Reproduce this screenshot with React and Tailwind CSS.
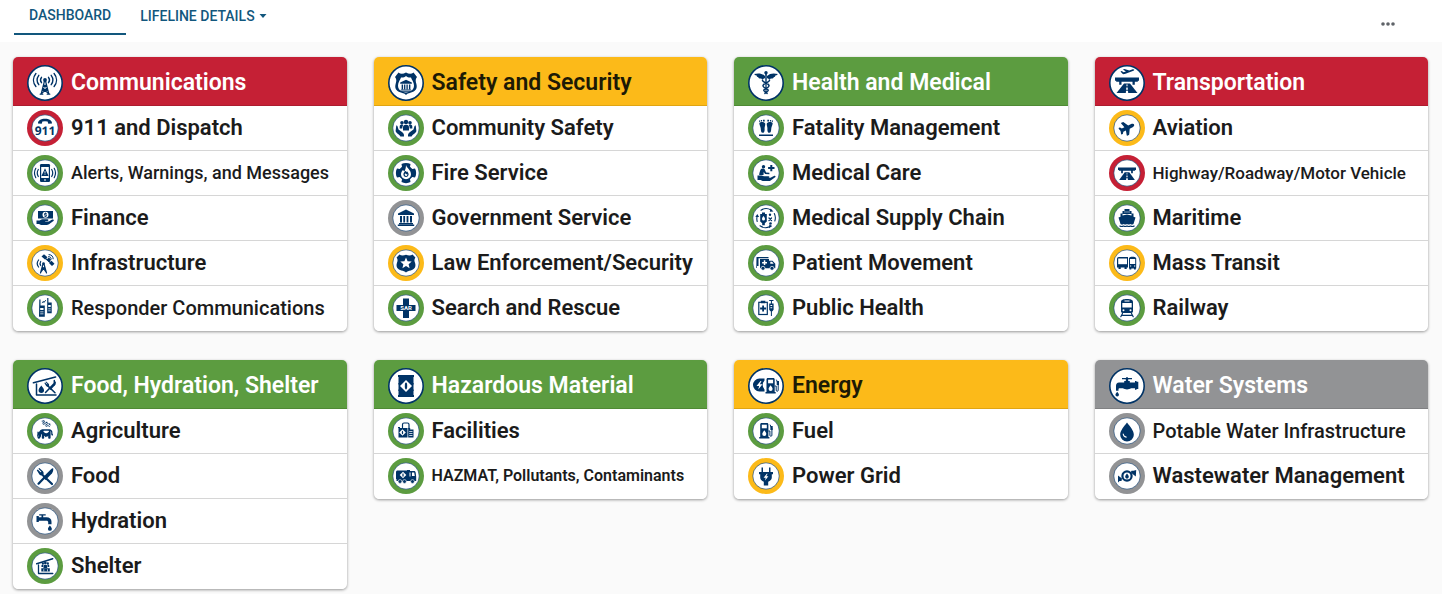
import { FaCow, FaFire, FaPlane, FaPlaneDeparture } from "react-icons/fa6";

const navy = "#003366";

const ringTheme = {
  red: "#c52035",
  green: "#5c9c40",
  yellow: "#fcba19",
  gray: "#929395",
};

const headerTheme = {
  red: "bg-[#c52035] border-[#ad1c2f] text-white",
  green: "bg-[#5c9c40] border-[#4f8a35] text-white",
  yellow: "bg-[#fcba19] border-[#e0a512] text-[#1d1a05]",
  gray: "bg-[#929395] border-[#808183] text-white",
};

const sizeTheme = {
  lg: "text-[22px] font-semibold",
  md: "text-[20px] font-medium",
  sm: "text-[18px] font-medium",
  xs: "text-[17px] font-medium",
  xxs: "text-[16px] font-semibold",
};

// Shared pieces, drawn on the same 36 x 36 grid as the badges
function Line({ d, w = 1.3, color = navy }) {
  return <path d={d} fill="none" stroke={color} strokeWidth={w} strokeLinecap="round" strokeLinejoin="round" />;
}

function Bolt({ x, y, s = 1 }) {
  return <path transform={`translate(${x} ${y}) scale(${s})`} d="M1-4l-4 5h2.6L-1.2 4.4 3-.8H.4L2-4z" fill="white" />;
}

function Pump() {
  return (
    <>
      <path d="M1 1.5C1 .6 1.5 0 2.4 0h5.4c.9 0 1.4.6 1.4 1.5V14h1v1.6H0V14h1z" />
      <rect x="2.6" y="1.7" width="5" height="3.6" fill="white" />
      <path d="M5.1 7.2c1 1.5 2 2.5 2 3.7a2 2 0 0 1-4 0c0-1.2 1-2.2 2-3.7z" fill="white" />
      <Line d="M9.5 8h1.2v4.2c0 1.5 2 1.5 2 0V5.5L11 2" w={1} />
      <rect x="11.2" y="3" width="2.3" height="4" />
    </>
  );
}

function Building() {
  return (
    <>
      <path d="m9 3.5 8-4 8 4V5H9z" />
      <path d="M11 6h2v6.5h-2zM14.300 6h1.800v6.500h-1.800zM17.600 6h1.800v6.500h-1.800zM21 6h2v6.500h-2zM10 13h14v1.200H10zM8.800 14.600h16.400v1.500H8.800z" />
    </>
  );
}

function Shield() {
  return (
    <path d="M11.500 9.500c1.300 1 3.900 1.300 6.500.2 2.600 1.100 5.200.8 6.500-.2l2.900 3c-1.500 2-1 3.600-.4 5.300 1.500 4.500-1 6.700-4.300 7.700-2 .5-3.500.9-4.700 2-1.200-1.100-2.700-1.500-4.700-2-3.300-1-5.800-3.200-4.300-7.700.6-1.700 1.100-3.300-.4-5.300z" />
  );
}

function Bridge() {
  return (
    <>
      <path d="M6 12.500h24v3.200h-1.200v1h-3v3h-2.300v-3h-11v3h-2.300v-3h-3v-1H6z" />
      <path d="M15 18.500h6L28.500 28h-21z" />
      <path d="M17.600 19.300h.8l.2 2h-1.200zM17.300 22.500h1.400l.2 2.200h-1.800zM17 25.800h2l.2 2.200h-2.400z" fill="white" />
    </>
  );
}

function Drop({ x, y, s = 1 }) {
  return <path transform={`translate(${x} ${y}) scale(${s})`} d="M0-8.5C2.5-5 6.5-1 6.5 3a6.5 6.5 0 0 1-13 0C-6.5-1-2.5-5 0-8.5z" />;
}

function Utensils() {
  return (
    <>
      <Line d="M14 15.5 25 26" w={2.2} />
      <path d="M9.800 12.300l1-.9 3 3 .6-.6-3-3 .9-.8 3.600 3.200c1 1.300 1 2.600 0 3.500-1.200 1-2.500.8-3.500-.2z" />
      <Line d="M11.500 25.700 17 20" w={2.2} />
      <path d="M15.800 19.500 24 11.200c.8-.8 1.600-1.200 2.200-1 .4 2.400-.6 4.600-2.300 6.400L18.600 22z" />
    </>
  );
}

function Diamond({ x, y, s = 1 }) {
  return (
    <g transform={`translate(${x} ${y}) scale(${s})`}>
      <path d="M0-6 6 0 0 6-6 0z" fill="white" />
      <ellipse rx="1.2" ry="3.4" />
    </g>
  );
}

function People() {
  return (
    <>
      <circle cx="14" cy="12.8" r="1.8" />
      <circle cx="18" cy="12" r="2.2" />
      <circle cx="22" cy="12.8" r="1.8" />
      <path d="M11.700 16.500c0-1.500 1-2 2.400-2 .7 0 1 .3 1 .7-.6.800-.8 1.800-.8 3.300h-2.600zM24.300 16.500c0-1.500-1-2-2.400-2-.7 0-1 .3-1 .7.600.800.800 1.800.800 3.300h2.600z" />
      <path d="M15 17.500c0-2 1.200-2.700 3-2.700s3 .7 3 2.700v3h-6z" />
    </>
  );
}

const glyphs = {
  tower: (
    <>
      <circle cx="18" cy="15" r="1.9" />
      <Line d="M14.500 12.300a4.500 4.500 0 0 0 0 5.400M21.500 12.300a4.500 4.500 0 0 1 0 5.400" w={1.4} />
      <Line d="M11.800 10.300a8 8 0 0 0 0 9.400M24.200 10.300a8 8 0 0 1 0 9.400" w={1.4} />
      <Line d="M8.900 8.500c-3.200 4-3.200 9.200 0 13M27.100 8.500c3.200 4 3.200 9.200 0 13" w={1.4} />
      <Line d="M17.500 16 14.300 28.500M18.500 16l3.200 12.500M16.500 20.300h3M15.600 24.500h4.800M16.400 20.500l3.900 3.800-5.500 3.700M19.600 20.500l-3.900 3.800 5.500 3.700M13.200 29.200h2.600M20.200 29.200h2.600" w={1.2} />
    </>
  ),
  dispatch: (
    <>
      <path d="M11 13.500c-.3-3 3-4.700 7-4.700s7.300 1.700 7 4.700l-3.700.3-.7-2.300a10 10 0 0 0-5.200 0l-.7 2.300z" />
      <text x="18" y="24.800" textAnchor="middle" fontSize="12" fontWeight="700" fontFamily="Open Sans, sans-serif" textRendering="geometricPrecision">911</text>
    </>
  ),
  alert: (
    <>
      <rect x="13" y="9" width="10" height="18" rx="1.3" />
      <rect x="14.2" y="12" width="7.6" height="11" fill="white" />
      <path d="M18 13.300 21.600 21h-7.200z" />
      <path d="M17.600 16h.8v2.500h-.8zM17.600 19.200h.8v.8h-.8zM17 24.500h2v1h-2z" fill="white" />
      <Line d="M11.300 14.500c-1.200 2-1.200 5 0 7M24.700 14.500c1.200 2 1.200 5 0 7M8.800 13.300c-1.700 3-1.700 6.400 0 9.400M27.200 13.300c1.700 3 1.700 6.400 0 9.400" w={1.2} />
    </>
  ),
  finance: (
    <>
      <rect x="11" y="11" width="15" height="7.5" />
      <circle cx="18.5" cy="14.7" r="3" fill="white" />
      <path d="M18.100 12.500h.8v.7h.9v.8h-1.600v.5h1.600v2h-.9v.6h-.8v-.6h-.9v-.8h1.700v-.5h-1.700v-2h.9z" />
      <path d="M9.500 20.500h3l2.500-1.300h5.500c1.200 0 1.200 1.700 0 1.800h-2.300v.5h3.600l3.400-1.900c1.400-.6 2.200.4 1.200 1.300l-4.400 3.300c-.8.600-1.500.8-2.400.8h-5.600l-2-.9H9.500z" />
    </>
  ),
  satellite: (
    <>
      <path d="m14.500 11.500 2.500-2.200 3.500 3-2.500 2.200zM22 18l2.500-2.200 3 3-2.500 2.200zM19.800 14.400l2-2 2.500 2.300-2.500 2.600z" />
      <Line d="M18.500 13.500l5 4" w={1.2} />
      <Line d="M22 9.600c2.500 0 4.200 1.800 4.200 4.200M21.600 11.600c1.600 0 2.600 1 2.600 2.400" w={1} />
      <circle cx="16.5" cy="18.5" r="1.300" />
      <Line d="m16 19-2.500 9M17 19l2.500 9M14.800 23.500h3.600M15.400 22l3.600 5M17.600 22l-3.600 5" w={1.2} />
      <Line d="M13.700 16.500c-.8 1.200-.8 2.800 0 4M11.600 15c-1.600 2-1.600 5 0 7" w={1.2} />
    </>
  ),
  radios: (
    <>
      <path d="M12.300 9.500h1.200v6h4.300v11.300H12zM20.200 8h1.200v4.500h3.300v10.800h-4.500z" />
      <path d="M13.200 18h3.300v2h-3.300zM13.200 21.500h3.300v.8h-3.300zM13.200 23.500h3.300v.8h-3.300zM21.200 15h2.500v2h-2.500zM21.200 18.500h2.500v.8h-2.500zM21.200 20.500h2.500v.8h-2.500z" fill="white" />
      <Line d="m15.200 12.500 1.300-1 .4 1 1.600-2" w={1} />
    </>
  ),
  safety: (
    <>
      <path d="M10.500 7.500c2 1.800 4.700 1.600 7.500 0 2.800 1.600 5.500 1.800 7.500 0L29 12c-2 2.600-1.300 4.700-.6 7 1.500 5.600-2 7.600-6 8.700-2 .5-3.400 1-4.400 2.300-1-1.300-2.400-1.800-4.400-2.300-4-1.100-7.500-3.100-6-8.700.7-2.300 1.400-4.400-.6-7z" />
      <path d="M18 11c1.500 1.300 3.200 1.800 5 1.500.6 2.200 3 4.700 3 8 0 5-4 6.300-8 7-4-.7-8-2-8-7 0-3.300 2.400-5.800 3-8 1.800.3 3.500-.2 5-1.500z" fill="white" />
      <g transform="translate(5.600 15) scale(.73)"><Building /></g>
    </>
  ),
  community: (
    <>
      <People />
      <path d="M8.300 15.500c1 0 1.300.7 1.500 1.700l.7 2.300 3.800 2.800c1.600 1.200 1.700 2.200 1.700 4.200h-3.600c-.3-1.600-4.600-3.500-4.800-5.500zM27.700 15.500c-1 0-1.300.7-1.500 1.700l-.7 2.300-3.800 2.800c-1.600 1.200-1.700 2.200-1.700 4.200h3.600c.3-1.600 4.600-3.500 4.800-5.500z" />
    </>
  ),
  fire: (
    <>
      <path d="M13.500 9c2.500-1.500 6.500-1.500 9 0l-.5 2.700 2.300 2.300 2.700-.5c1.500 2.500 1.500 6.500 0 9l-2.700-.5-2.300 2.300.5 2.700c-2.500 1.500-6.500 1.500-9 0l.5-2.700-2.300-2.300-2.700.5c-1.500-2.500-1.500-6.500 0-9l2.700.5 2.300-2.300z" />
      <path d="M18 10c.5 3 5 4.800 5 9.200a5 5 0 0 1-10 0c0-2 1-3.300 2-4.300l1.300 1.600c1-1.700 1.700-3.500 1.700-6.500z" fill="white" />
      <FaFire x="15" y="16" size={6} color={navy} />
    </>
  ),
  government: <g transform="translate(1 10)"><Building /></g>,
  police: (
    <>
      <Shield />
      <path d="m18 12.500 1.600 3.800 4.100.3-3.100 2.600 1 4-3.600-2.200-3.600 2.200 1-4-3.100-2.600 4.100-.3z" fill="white" />
    </>
  ),
  rescue: (
    <>
      <path d="M15 8.500h6V15h6.500v6H21v7h-6v-7H8.500v-6H15z" />
      <text x="18" y="20.200" textAnchor="middle" fontSize="6" fontWeight="700" fill="white">SAR</text>
    </>
  ),
  caduceus: (
    <>
      <circle cx="18" cy="7.800" r="1.700" />
      <path d="M17 11c-3-3-7-3-11-2 1 1 2 1.500 3 1.700-.4.500-.2 1 1.300 1.500 0 .8 1 1.400 2.300 1.400 1.400.8 3.400.5 4.400-.6zM19 11c3-3 7-3 11-2-1 1-2 1.500-3 1.700.4.500.2 1-1.300 1.500 0 .8-1 1.400-2.300 1.400-1.400.8-3.400.5-4.400-.6z" />
      <path d="M17.200 9h1.600l-.3 20h-1z" />
      <Line d="M14.500 15c-1 2.500 7 3 6.500 6-.4 2.500-5.500 2-5.200 4.500.2 1.500 3.500 1.300 3.300 3M21.500 15c1 2.500-7 3-6.500 6 .4 2.500 5.500 2 5.200 4.500-.2 1.500-3.500 1.300-3.300 3" w={1.5} />
    </>
  ),
  feet: (
    <>
      <path d="M11.500 12.800c1-1.300 5.200-1.200 5.700.8.300 2-.7 3-.6 5 .2 2.500-.5 4.200-1.900 4.200-1.700 0-1.800-2-2-4.500-.2-2-1.800-3.800-1.200-5.500zM24.500 12.800c-1-1.300-5.200-1.200-5.700.8-.3 2 .7 3 .6 5-.2 2.500.5 4.200 1.900 4.200 1.700 0 1.800-2 2-4.500.2-2 1.800-3.800 1.200-5.500z" />
      <path d="M11 10.500h1.200v1.300H11zM12.900 9.900h1.200v1.500h-1.200zM15 9.700h1.700v1.700H15zM19.300 9.700H21v1.700h-1.700zM21.900 9.900h1.200v1.500h-1.200zM23.800 10.500H25v1.300h-1.200zM11 24.500h14V26H11z" />
    </>
  ),
  care: (
    <>
      <circle cx="15.5" cy="11.700" r="1.700" />
      <path d="M13 14c.8-.8 2.800-.8 3.500 0l1.600 3.500 3.300.3v1.500l-4.300-.2-1.400-2-.2 3h-4.300c0-2 .8-4.500 1.800-6.100z" />
      <path d="M22.300 10h2v2h2.200v2h-2.200v2.200h-2V14h-2.200v-2h2.200z" />
      <path d="M9.500 20.500h4l2.500.7h4.500c1.200 0 1.200 1.500 0 1.600h2l3.400-1.900c1.400-.6 2.200.4 1.200 1.300L23 25.300c-.8.600-1.500.8-2.400.8h-6l-2-1H9.500z" />
    </>
  ),
  supply: (
    <>
      <Line d="M13 10.200a9.500 9.500 0 0 1 10-.2M26.300 13.500a9.500 9.500 0 0 1 .5 7.500M22 26.600a9.500 9.500 0 0 1-10-.8M9.200 21.500a9.500 9.500 0 0 1-.2-4.500" w={1.1} />
      <path d="m22.500 8.500 3 3-3.700.3zM7.300 17l2-3 1.800 3zM21 28.200l.3-3.700 3 1.500z" />
      <path d="M14 12.500h3V14h1.800v7.500l-2 1.700v2h-2.600v-2l-2-1.700V14H14z" />
      <path d="M15.500 16c.8 1.100 1.500 2 1.500 2.900a1.500 1.500 0 0 1-3 0c0-.9.7-1.800 1.500-2.900z" fill="white" />
      <circle cx="22" cy="14.800" r="1.200" />
      <Line d="m21 18 2.500 2.500m0-2.500L21 20.500" w={1.3} />
      <circle cx="22.500" cy="23.500" r="1.300" />
    </>
  ),
  ambulance: (
    <>
      <path d="M8.500 12h12v1.200h-10V21H9v2H8.300z" />
      <path d="M12 14h9v1.800h3.500l2.800 3v4.500H12z" />
      <path d="M15.800 15.200h1.500v1.700h1.700v1.500h-1.700v1.700h-1.500v-1.700h-1.700v-1.500h1.700zM22.300 16.800h1.800l1.600 2h-3.400z" fill="white" />
      <circle cx="15" cy="23.300" r="2" stroke="white" strokeWidth=".7" />
      <circle cx="24" cy="23.300" r="2" stroke="white" strokeWidth=".7" />
    </>
  ),
  clinic: (
    <>
      <rect x="10.800" y="12.300" width="8.500" height="12.200" fill="none" stroke={navy} strokeWidth="1.200" />
      <path d="M12.800 10.700h4.500v2.600h-4.500zM14.200 15.500H16v2.100h2.100v1.800H16v2.100h-1.800v-2.100h-2.100v-1.800h2.100z" />
      <path d="M21.200 10h4.300v1.100h-1.600v2.400h1.700v6.200l-1.200 1.500h-.5V26h-1v-4.800h-.5l-1.200-1.500v-6.200h1.700v-2.400h-1.700z" />
      <path d="M22.400 15h1.800v1h-1.800zM22.400 17.200h1.800v1h-1.800z" fill="white" />
    </>
  ),
  transport: (
    <>
      <path d="m11.500 6.500 1.200-.4 2 1.200 2.200-.7-3-2 1.600-.5 4.800 1.400 3.400-1.200c1.300-.3 2.300.7.800 1.500l-8.700 3.300c-1 .3-1.800.2-2.600-.5z" />
      <Bridge />
    </>
  ),
  plane: <g transform="rotate(-25 18 18)"><FaPlane x="10" y="10" size={16} color={navy} /></g>,
  highway: <g transform="translate(4.500 2.500) scale(.75 .8)"><Bridge /></g>,
  ship: (
    <>
      <path d="M15.500 9h5v2h2v2.500h2v3.300l2 .7-2 6.500c-1.200.8-2 .8-3.200 0-1.200.8-2 .8-3.300 0-1.300.8-2.100.8-3.300 0-1.200.8-2 .8-3.200 0l-2-6.500 2-.7v-3.300h2V11h2z" />
      <path d="M13.500 14h9v1.400l-4.500-1-4.500 1zM15.500 11.400h1v1h-1zM17.500 11.400h1v1h-1zM19.500 11.400h1v1h-1z" fill="white" />
      <Line d="M10.800 26c1.200.7 2.400.7 3.600 0 1.200.7 2.400.7 3.600 0 1.200.7 2.400.7 3.600 0 1.200.7 2.400.7 3.600 0" w={1.1} />
    </>
  ),
  bus: (
    <>
      <path d="M8 14c0-1.300.6-2 1.800-2H19v10.500H8z" />
      <path d="M9.200 13.500H18v5.700H9.200z" fill="white" />
      <path d="M9.500 22h2.200v2H9.500zM15.500 22h2.200v2h-2.200z" />
      <path d="M20 13c1-1.800 6-1.800 7.200 0v10.500H20z" />
      <path d="M21 14h5.200v5H21zM21 20.500h1.200v1H21zM25 20.500h1.200v1H25z" fill="white" />
      <path d="M20.500 23h1.800v1.600h-1.800zM25 23h1.800v1.600H25z" />
    </>
  ),
  train: (
    <>
      <path d="M12 12c0-2.200 2.500-3 6-3s6 .8 6 3v9.300c0 1-.7 1.700-1.700 1.700h-8.600c-1 0-1.700-.7-1.700-1.700z" />
      <path d="M15.500 10.500h5v1h-5zM13.300 13h9.400v4.500h-9.400z" fill="white" />
      <circle cx="14.500" cy="20.300" r="1" fill="white" />
      <circle cx="21.500" cy="20.300" r="1" fill="white" />
      <Line d="m13.500 23.500-1.700 3.200M22.500 23.500l1.700 3.200M13.500 25.300h9" w={1.2} />
    </>
  ),
  foodShelter: (
    <>
      <Line d="m6.500 14.700 22-5.700" w={1.7} />
      <Line d="M9.500 16v11H29M27.300 12.500v2" w={1.5} />
      <Drop x={14.3} y={21} s={0.42} />
      <g transform="translate(10.500 6.500) scale(.7)"><Utensils /></g>
    </>
  ),
  cow: (
    <>
      <Line d="m15 8.500 7.500 5" w={0.8} />
      <path d="m15 7.600 2.200-.3 1 2.300zM18 9l2.200-.2.800 2.400zM20.800 10.500l2.400 0 .3 2.200zM14.800 10.200l1.600 1.600 1.900-.9zM17.600 12.200l1.600 1.600 1.900-.9z" />
      <g transform="matrix(-1 0 0 1 36 0)">
        <FaCow x="10" y="13" size={16} color={navy} />
      </g>
    </>
  ),
  utensils: <Utensils />,
  faucet: (
    <>
      <path d="M9.500 13h2.300v1.200h2.700v-1.700h-2.300v-1.300h6.500v1.300h-2.500v1.700h3.300c3 0 5 1.700 5 4.500v2.500h-3.300v-2c0-1-.7-1.500-1.700-1.500h-7.700V19H9.500z" />
      <Drop x={22.900} y={25} s={0.3} />
    </>
  ),
  shelter: (
    <>
      <Line d="m9.700 15.700 16-5" w={1.5} />
      <Line d="M11.500 17v8.500h14.300" w={1.3} />
      <g transform="translate(7.200 7.500) scale(.62)"><People /></g>
      <path d="M14.300 20.300h8.500v3.200h-8.500z" />
      <path d="M16.500 21.300h.7v2.200h-.7zM20 21.300h.7v2.200H20z" fill="white" />
    </>
  ),
  barrel: (
    <>
      <path d="M10 7h16v2h-.5v6h.3v1.500h-.3v5h.3V23h-.3v4h.5v2H10v-2h.5v-4h-.3v-1.500h.3v-5h-.3V15h.3V9H10z" />
      <Diamond x={18} y={18} />
    </>
  ),
  facility: (
    <>
      <path d="M10.500 15h9v9.500h-9zM10 14h2v1h-2z" />
      <Diamond x={14.5} y={19.5} s={0.55} />
      <Line d="M14.500 14.500v-3c0-1 .5-1.500 1.500-1.500h3.500c1 0 1.500.5 1.500 1.500v4" w={1.2} />
      <path d="M20.200 15h2v1.500h3.300v8h-5.300z" />
      <path d="M21.200 18h3.300v.8h-3.300zM21.200 20h3.300v.8h-3.300zM21.200 22h3.300v.8h-3.300z" fill="white" />
    </>
  ),
  tanker: (
    <>
      <path d="M8 14c0-1 .7-1.600 1.700-1.600H19V12h3v1h4c1 0 1.500.7 1.700 1.700l.5 4V23H8.500v-2H8z" />
      <Diamond x={15} y={17} s={0.55} />
      <path d="M21.500 14.500h1v4h-1zM24 14.500h2.200l.6 3.500H24z" fill="white" />
      <circle cx="12" cy="23.500" r="1.900" stroke="white" strokeWidth=".6" />
      <circle cx="16.500" cy="23.500" r="1.900" stroke="white" strokeWidth=".6" />
      <circle cx="24.500" cy="23.500" r="1.900" stroke="white" strokeWidth=".6" />
    </>
  ),
  energy: (
    <>
      <path d="M11.500 10.500h5v2a6.500 6.500 0 0 0 0 9v2h-5a6.500 6.500 0 0 1 0-13z" />
      <Bolt x={11.5} y={17} />
      <g transform="translate(17.500 10)"><Pump /></g>
    </>
  ),
  pump: <g transform="translate(11.200 10)"><Pump /></g>,
  plug: (
    <>
      <path d="M13.500 9.500H15V14h6V9.500h1.500V14H25v2.300h-1.200v3.200c0 2-1.500 3.500-3.600 4.300V27.500h-4.400v-3.700c-2.100-.8-3.600-2.300-3.600-4.300v-3.200H11V14h2.500z" />
      <Bolt x={18} y={19} s={0.8} />
    </>
  ),
  valve: (
    <>
      <path d="M13 10h4.300V9h1.400v1H23v1.300h-3.800V13h1.600v1.500H26V13h1.500v.8h1.800V21h-1.800v.8H26v-1.500h-4c-2 1.500-6 1.500-8 0h-3.300c-.8 0-1.200.4-1.200 1.200v1.300H7v-5c0-2 1-3.300 3-3.300h5.200V13h1.600v-1.700H13z" />
      <Drop x={8.2} y={26} s={0.27} />
    </>
  ),
  drop: (
    <>
      <Drop x={18} y={18.5} s={1.05} />
      <Line d="M14.200 21c.2 1.700 1.300 2.800 3 3.100" w={1.1} color="white" />
    </>
  ),
  wastewater: (
    <>
      <circle cx="18" cy="18" r="4.600" fill="none" stroke={navy} strokeWidth="2.200" />
      <Drop x={18} y={18} s={0.28} />
      <path d="M9 17.500l4 3-.5 2.500h-2L9 24.500zM27.200 12l-.4 6.500-3.500-2.700-1.500-1.500.7-1.500h2z" />
    </>
  ),
};

function Badge({ icon, color }) {
  return (
    <svg viewBox="0 0 36 36" className="size-9 shrink-0" fill={navy} aria-hidden="true">
      {color ? (
        <>
          <circle cx="18" cy="18" r="18" fill={ringTheme[color]} />
          <circle cx="18" cy="18" r="13.200" fill="white" stroke={navy} strokeWidth=".6" />
        </>
      ) : (
        <circle cx="18" cy="18" r="17.200" fill="white" stroke={navy} strokeWidth="1.600" />
      )}
      {glyphs[icon]}
    </svg>
  );
}

const lifelines = [
  {
    title: "Communications",
    icon: "tower",
    color: "red",
    items: [
      { name: "911 and Dispatch", icon: "dispatch", color: "red" },
      { name: "Alerts, Warnings, and Messages", icon: "alert", color: "green", size: "sm" },
      { name: "Finance", icon: "finance", color: "green" },
      { name: "Infrastructure", icon: "satellite", color: "yellow" },
      { name: "Responder Communications", icon: "radios", color: "green", size: "md" },
    ],
  },
  {
    title: "Safety and Security",
    icon: "safety",
    color: "yellow",
    items: [
      { name: "Community Safety", icon: "community", color: "green" },
      { name: "Fire Service", icon: "fire", color: "green" },
      { name: "Government Service", icon: "government", color: "gray" },
      { name: "Law Enforcement/Security", icon: "police", color: "yellow" },
      { name: "Search and Rescue", icon: "rescue", color: "green" },
    ],
  },
  {
    title: "Health and Medical",
    icon: "caduceus",
    color: "green",
    items: [
      { name: "Fatality Management", icon: "feet", color: "green" },
      { name: "Medical Care", icon: "care", color: "green" },
      { name: "Medical Supply Chain", icon: "supply", color: "green" },
      { name: "Patient Movement", icon: "ambulance", color: "green" },
      { name: "Public Health", icon: "clinic", color: "green" },
    ],
  },
  {
    title: "Transportation",
    icon: "transport",
    color: "red",
    items: [
      { name: "Aviation", icon: "plane", color: "yellow" },
      { name: "Highway/Roadway/Motor Vehicle", icon: "highway", color: "red", size: "xs" },
      { name: "Maritime", icon: "ship", color: "green" },
      { name: "Mass Transit", icon: "bus", color: "yellow" },
      { name: "Railway", icon: "train", color: "green" },
    ],
  },
  {
    title: "Food, Hydration, Shelter",
    icon: "foodShelter",
    color: "green",
    items: [
      { name: "Agriculture", icon: "cow", color: "green" },
      { name: "Food", icon: "utensils", color: "gray" },
      { name: "Hydration", icon: "faucet", color: "gray" },
      { name: "Shelter", icon: "shelter", color: "green" },
    ],
  },
  {
    title: "Hazardous Material",
    icon: "barrel",
    color: "green",
    items: [
      { name: "Facilities", icon: "facility", color: "green" },
      { name: "HAZMAT, Pollutants, Contaminants", icon: "tanker", color: "green", size: "xxs" },
    ],
  },
  {
    title: "Energy",
    icon: "energy",
    color: "yellow",
    items: [
      { name: "Fuel", icon: "pump", color: "green" },
      { name: "Power Grid", icon: "plug", color: "yellow" },
    ],
  },
  {
    title: "Water Systems",
    icon: "valve",
    color: "gray",
    items: [
      { name: "Potable Water Infrastructure", icon: "drop", color: "gray", size: "md" },
      { name: "Wastewater Management", icon: "wastewater", color: "gray" },
    ],
  },
];

function LifelineCard({ lifeline }) {
  return (
    <section className="rounded-[5px] bg-white overflow-hidden shadow-[0_1px_3px_rgba(0,0,0,0.4)]">
      <header className={`flex items-center gap-2 pl-3.5 pt-2 pb-1 border-b ${headerTheme[lifeline.color]}`}>
        <Badge icon={lifeline.icon} />
        <h2 className="text-[23px] leading-9 font-semibold whitespace-nowrap">{lifeline.title}</h2>
      </header>
      <ul>
        {lifeline.items.map((item) => (
          <li
            key={item.name}
            className="flex items-center gap-2 pl-3.5 py-1 border-b border-[#d6d6d6] last:border-white text-[#1b1b1b]"
          >
            <Badge icon={item.icon} color={item.color} />
            <span className={`${sizeTheme[item.size || "lg"]} leading-9 whitespace-nowrap`}>{item.name}</span>
          </li>
        ))}
      </ul>
    </section>
  );
}

export default function App() {
  return (
    <div className="min-h-screen bg-[#fafafa] font-[Roboto,sans-serif]">
      <nav className="flex items-start justify-between bg-white pl-3.5 pr-[46px] h-[42px] text-[14px] font-medium text-[#12577d]">
        <div className="flex">
          <a href="#dashboard" className="px-[15px] pt-[3px] pb-1.5 leading-6 border-b-2 border-[#12577d]">
            DASHBOARD
          </a>
          <button type="button" className="flex items-center gap-1 px-3.5 pt-[3px] pb-1.5 leading-6">
            LIFELINE DETAILS
            <svg viewBox="0 0 8 4" className="w-2 h-1" fill="currentColor" aria-hidden="true">
              <path d="M.5 0h7L4 4z" />
            </svg>
          </button>
        </div>
        <button type="button" aria-label="More options" className="self-center pt-1.5">
          <svg viewBox="0 0 16 4" className="w-4 h-1" fill="#5f6368">
            <circle cx="3" cy="2" r="1.8" />
            <circle cx="8" cy="2" r="1.8" />
            <circle cx="13" cy="2" r="1.8" />
          </svg>
        </button>
      </nav>
      <main className="grid grid-cols-4 items-start gap-x-[27px] gap-y-[29px] pl-[13px] pr-[14px] pt-[15px] pb-1">
        {lifelines.map((lifeline) => (
          <LifelineCard key={lifeline.title} lifeline={lifeline} />
        ))}
      </main>
    </div>
  );
}
